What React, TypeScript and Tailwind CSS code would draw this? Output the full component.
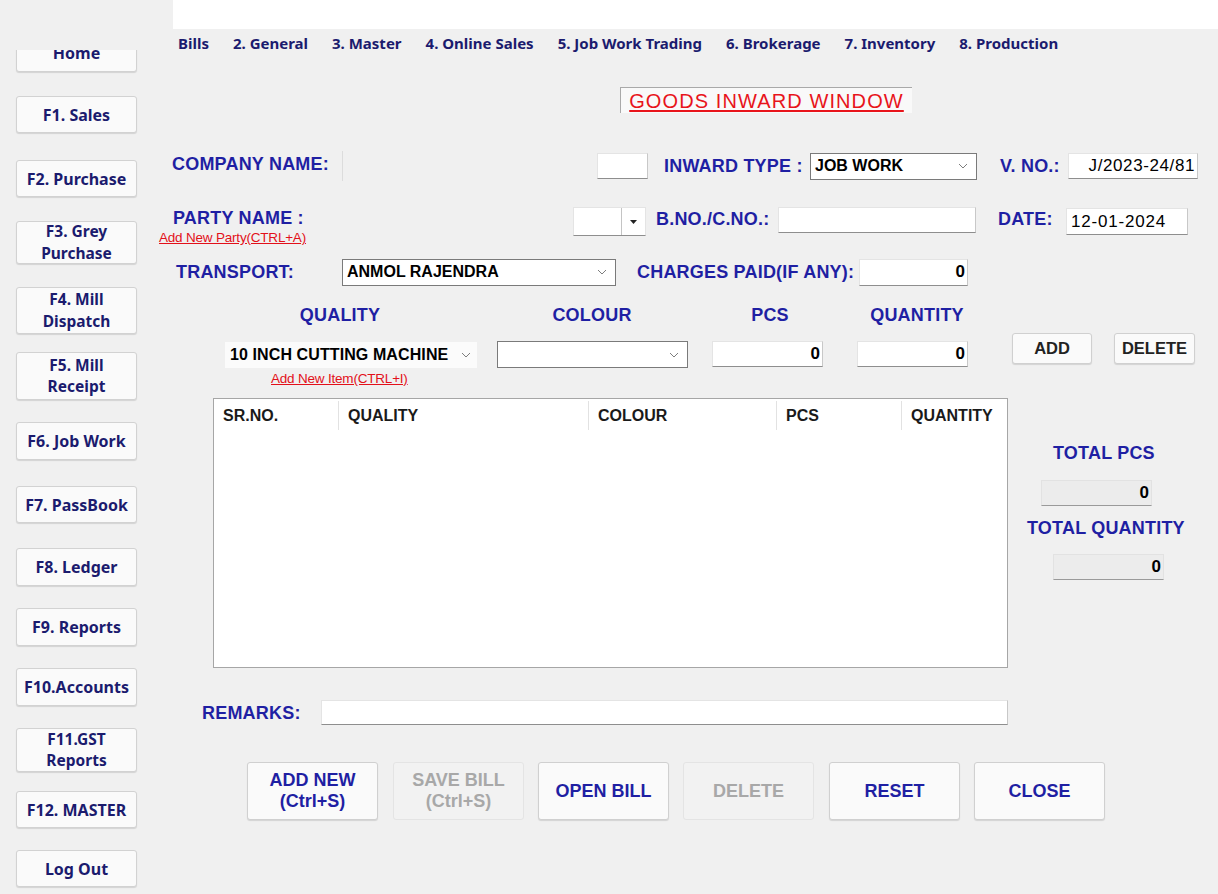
const LBL = "font-['Liberation_Sans',Arial,sans-serif] font-bold text-[18px] tracking-[0.2px] text-[#1f1fa3] whitespace-nowrap leading-[22px]"
const NAV = "font-['Noto_Sans',sans-serif] font-bold text-[15px] text-[#1b1b6e] whitespace-nowrap"
const SIDE = "font-['Noto_Sans',sans-serif] font-bold text-[16px] text-[#1b1b6e] whitespace-nowrap"
const SIDE2 = "font-['Noto_Sans',sans-serif] font-bold text-[15.5px] leading-[21.2px] text-[#1b1b6e] whitespace-nowrap"
const DATA = "font-['Liberation_Sans',Arial,sans-serif] text-black whitespace-nowrap"
const LINK = "font-['Liberation_Sans',Arial,sans-serif] text-[13.5px] text-[#e3101a] underline tracking-[-0.2px] whitespace-nowrap leading-none"
const INPUT = "bg-white border border-[#e4e4e4] border-b-[#8e8e8e] border-r-[#c8c8c8] flex items-center"

const sideButtons = [
  { label: ['Home'], cls: '-mt-[16px] h-[38px]' },
  { label: ['F1. Sales'], cls: 'mt-[24px] h-[37px]' },
  { label: ['F2. Purchase'], cls: 'mt-[27px] h-[37px]' },
  { label: ['F3. Grey', 'Purchase'], cls: 'mt-[24px] h-[43px]' },
  { label: ['F4. Mill', 'Dispatch'], cls: 'mt-[23px] h-[47px]' },
  { label: ['F5. Mill', 'Receipt'], cls: 'mt-[18px] h-[48px]' },
  { label: ['F6. Job Work'], cls: 'mt-[22px] h-[38px]' },
  { label: ['F7. PassBook'], cls: 'mt-[26px] h-[37px]' },
  { label: ['F8. Ledger'], cls: 'mt-[25px] h-[38px]' },
  { label: ['F9. Reports'], cls: 'mt-[22px] h-[38px]' },
  { label: ['F10.Accounts'], cls: 'mt-[22px] h-[38px]' },
  { label: ['F11.GST', 'Reports'], cls: 'mt-[22px] h-[44px]' },
  { label: ['F12. MASTER'], cls: 'mt-[19px] h-[37px]' },
  { label: ['Log Out'], cls: 'mt-[22px] h-[37px]' },
]

const menu = ['Bills', '2. General', '3. Master', '4. Online Sales', '5. Job Work Trading', '6. Brokerage', '7. Inventory', '8. Production']

const columns = [
  { name: 'SR.NO.', cls: 'w-[125px]' },
  { name: 'QUALITY', cls: 'w-[250px]' },
  { name: 'COLOUR', cls: 'w-[188px]' },
  { name: 'PCS', cls: 'w-[125px]' },
  { name: 'QUANTITY', cls: 'flex-1' },
]

const Chevron = () => (
  <svg width="10" height="6" viewBox="0 0 10 6" className="shrink-0">
    <polyline points="1,1 5,5 9,1" fill="none" stroke="#7d7d7d" strokeWidth="1" />
  </svg>
)

function Select({ value, cls }: { value: string; cls: string }) {
  return (
    <div className={`bg-white border border-[#7a7a7a] flex items-center justify-between pl-[4px] pr-[8px] ${cls}`}>
      <span className={`${DATA} font-bold text-[16px]`}>{value}</span>
      <Chevron />
    </div>
  )
}

function SideButton({ label, cls }: { label: string[]; cls: string }) {
  return (
    <div
      className={`w-[121px] shrink-0 rounded-[3px] bg-[#fafafa] border border-[#d2d2d2] shadow-[0_1px_1px_rgba(0,0,0,0.12)] flex items-center justify-center ${cls}`}
    >
      {label.length > 1 ? (
        <span className={`text-center ${SIDE2}`}>
          {label[0]}
          <br />
          {label[1]}
        </span>
      ) : (
        <span className={SIDE}>{label[0]}</span>
      )}
    </div>
  )
}

function BigButton({ lines, disabled, cls }: { lines: string[]; disabled?: boolean; cls: string }) {
  return (
    <div
      className={`w-[131px] h-[58px] rounded-[3px] flex items-center justify-center font-['Liberation_Sans',Arial,sans-serif] font-bold text-[18px] ${
        disabled
          ? 'bg-[#f2f2f2] border border-[#e4e4e4] text-[#a8a8a8]'
          : 'bg-[#fafafa] border border-[#d0d0d0] shadow-[0_1px_1px_rgba(0,0,0,0.12)] text-[#1f1fa3]'
      } ${cls}`}
    >
      <span className="text-center leading-[21px]">
        {lines[0]}
        {lines[1] && <br />}
        {lines[1]}
      </span>
    </div>
  )
}

export default function App() {
  return (
    <div className="w-[1218px] h-[894px] bg-[#f0f0f0] flex overflow-hidden">
      {/* sidebar */}
      <div className="w-[150px] shrink-0 mt-[50px] h-[844px] overflow-hidden flex flex-col pl-[16px]">
        {sideButtons.map(b => (
          <SideButton key={b.label.join(' ')} label={b.label} cls={b.cls} />
        ))}
      </div>

      {/* main */}
      <div className="flex-1 flex flex-col">
        <div className="ml-[23px] h-[29px] bg-white" />

        <div className="h-[28px] ml-[28px] flex items-center gap-[24px]">
          {menu.map(m => (
            <span key={m} className={NAV}>{m}</span>
          ))}
        </div>

        <div className="mt-[30px] ml-[470px] w-[292px] h-[26px] bg-[#f9f9f9] border-l border-t border-[#a9a9a9] flex items-center justify-center">
          <span className="font-['Liberation_Sans',Arial,sans-serif] text-[20px] tracking-[1.1px] text-[#e8141b] underline decoration-[1.5px] underline-offset-[2px] leading-none">
            GOODS INWARD WINDOW
          </span>
        </div>

        {/* row 1 */}
        <div className="mt-[37px] h-[32px] flex items-center">
          <div className={`ml-[22px] w-[170px] ${LBL} -mt-[4px]`}>COMPANY NAME:</div>
          <div className="w-px h-[30px] bg-[#dcdcdc]" />
          <div className={`ml-[254px] w-[51px] h-[26px] ${INPUT}`} />
          <div className={`ml-[16px] w-[142px] ${LBL}`}>INWARD TYPE :</div>
          <Select value="JOB WORK" cls="ml-[4px] w-[167px] h-[27px]" />
          <div className={`ml-[23px] w-[62px] ${LBL}`}>V. NO.:</div>
          <div className={`ml-[6px] w-[130px] h-[26px] ${INPUT} justify-end pr-[2px]`}>
            <span className={`${DATA} text-[17px] tracking-[0.6px]`}>J/2023-24/81</span>
          </div>
        </div>

        {/* row 2 */}
        <div className="mt-[23px] h-[40px] flex items-start">
          <div className="ml-[9px] w-[170px] flex flex-col">
            <span className={`pl-[14px] ${LBL} leading-[20px] mt-[2px]`}>PARTY NAME :</span>
            <span className={`${LINK} mt-[2px]`}>Add New Party(CTRL+A)</span>
          </div>
          <div className="ml-[244px] mt-[2px] w-[73px] h-[29px] bg-white border border-[#e4e4e4] border-b-[#8e8e8e] flex">
            <div className="flex-1" />
            <div className="w-[24px] border-l border-[#c4c4c4] flex items-center justify-center">
              <svg width="7" height="4" viewBox="0 0 7 4">
                <polygon points="0,0 7,0 3.5,4" fill="#222" />
              </svg>
            </div>
          </div>
          <div className={`ml-[10px] mt-[3px] w-[112px] ${LBL}`}>B.NO./C.NO.:</div>
          <div className={`ml-[10px] mt-[2px] w-[198px] h-[26px] ${INPUT}`} />
          <div className={`ml-[22px] mt-[3px] w-[56px] ${LBL}`}>DATE:</div>
          <div className={`ml-[12px] mt-[3px] w-[122px] h-[27px] ${INPUT} pl-[4px]`}>
            <span className={`${DATA} text-[17px] tracking-[0.8px]`}>12-01-2024</span>
          </div>
        </div>

        {/* row 3 */}
        <div className="mt-[12px] h-[30px] flex items-center">
          <div className={`ml-[26px] w-[166px] ${LBL}`}>TRANSPORT:</div>
          <Select value="ANMOL RAJENDRA" cls="w-[274px] h-[27px]" />
          <div className={`ml-[21px] w-[218px] ${LBL}`}>CHARGES PAID(IF ANY):</div>
          <div className={`ml-[4px] w-[109px] h-[27px] ${INPUT} justify-end pr-[2px]`}>
            <span className={`${DATA} font-bold text-[17px]`}>0</span>
          </div>
        </div>

        {/* column headings */}
        <div className="mt-[18px] h-[20px] flex items-center">
          <div className={`ml-[130px] w-[120px] text-center ${LBL}`}>QUALITY</div>
          <div className={`ml-[132px] w-[120px] text-center ${LBL}`}>COLOUR</div>
          <div className={`ml-[78px] w-[80px] text-center ${LBL}`}>PCS</div>
          <div className={`ml-[47px] w-[120px] text-center ${LBL}`}>QUANTITY</div>
        </div>

        {/* entry row */}
        <div className="mt-[8px] h-[36px] flex items-start">
          <div className="ml-[75px] mt-[9px] w-[252px] h-[26px] bg-[#fbfbfb] flex items-center justify-between pl-[5px] pr-[6px]">
            <span className={`${DATA} font-bold text-[16px] tracking-[0.1px]`}>10 INCH CUTTING MACHINE</span>
            <Chevron />
          </div>
          <div className="ml-[20px] mt-[8px] w-[191px] h-[27px] bg-white border border-[#7a7a7a] flex items-center justify-end pr-[8px]">
            <Chevron />
          </div>
          <div className={`ml-[24px] mt-[8px] w-[111px] h-[26px] ${INPUT} justify-end pr-[2px]`}>
            <span className={`${DATA} font-bold text-[17px]`}>0</span>
          </div>
          <div className={`ml-[34px] mt-[8px] w-[111px] h-[26px] ${INPUT} justify-end pr-[2px]`}>
            <span className={`${DATA} font-bold text-[17px]`}>0</span>
          </div>
          <div className="ml-[44px] w-[80px] h-[31px] rounded-[3px] bg-[#fafafa] border border-[#d0d0d0] shadow-[0_1px_1px_rgba(0,0,0,0.12)] flex items-center justify-center font-['Liberation_Sans',Arial,sans-serif] font-bold text-[16.5px] text-[#222]">
            ADD
          </div>
          <div className="ml-[22px] w-[81px] h-[31px] rounded-[3px] bg-[#fafafa] border border-[#d0d0d0] shadow-[0_1px_1px_rgba(0,0,0,0.12)] flex items-center justify-center font-['Liberation_Sans',Arial,sans-serif] font-bold text-[16.5px] text-[#222]">
            DELETE
          </div>
        </div>

        <div className="mt-[2px] h-[16px] flex items-center">
          <span className={`ml-[121px] ${LINK}`}>Add New Item(CTRL+I)</span>
        </div>

        {/* table + totals */}
        <div className="mt-[11px] flex">
          <div className="ml-[63px] w-[795px] h-[270px] bg-white border border-[#a6a6a6] flex flex-col">
            <div className="h-[33px] flex items-stretch">
              {columns.map((c, i) => (
                <div
                  key={c.name}
                  className={`${c.cls} flex items-center pl-[9px] my-[2px] ${i < columns.length - 1 ? 'border-r border-[#e2e2e2]' : ''} font-['Liberation_Sans',Arial,sans-serif] font-bold text-[16px] text-[#1a1a1a]`}
                >
                  {c.name}
                </div>
              ))}
            </div>
          </div>

          <div className="ml-[12px] flex flex-col items-start">
            <div className={`ml-[33px] mt-[44px] ${LBL}`}>TOTAL PCS</div>
            <div className="ml-[21px] mt-[16px] w-[111px] h-[26px] bg-[#ececec] border border-[#e2e2e2] border-b-[#9a9a9a] flex items-center justify-end pr-[2px]">
              <span className={`${DATA} font-bold text-[17px]`}>0</span>
            </div>
            <div className={`ml-[7px] mt-[11px] ${LBL}`}>TOTAL QUANTITY</div>
            <div className="ml-[33px] mt-[15px] w-[111px] h-[26px] bg-[#ececec] border border-[#e2e2e2] border-b-[#9a9a9a] flex items-center justify-end pr-[2px]">
              <span className={`${DATA} font-bold text-[17px]`}>0</span>
            </div>
          </div>
        </div>

        {/* remarks */}
        <div className="mt-[32px] h-[25px] flex items-center">
          <div className={`ml-[52px] w-[119px] ${LBL}`}>REMARKS:</div>
          <div className={`w-[687px] h-[25px] ${INPUT}`} />
        </div>

        {/* buttons */}
        <div className="mt-[37px] flex">
          <BigButton lines={['ADD NEW', '(Ctrl+S)']} cls="ml-[97px]" />
          <BigButton lines={['SAVE BILL', '(Ctrl+S)']} disabled cls="ml-[15px]" />
          <BigButton lines={['OPEN BILL']} cls="ml-[14px]" />
          <BigButton lines={['DELETE']} disabled cls="ml-[14px]" />
          <BigButton lines={['RESET']} cls="ml-[15px]" />
          <BigButton lines={['CLOSE']} cls="ml-[14px]" />
        </div>
      </div>
    </div>
  )
}
